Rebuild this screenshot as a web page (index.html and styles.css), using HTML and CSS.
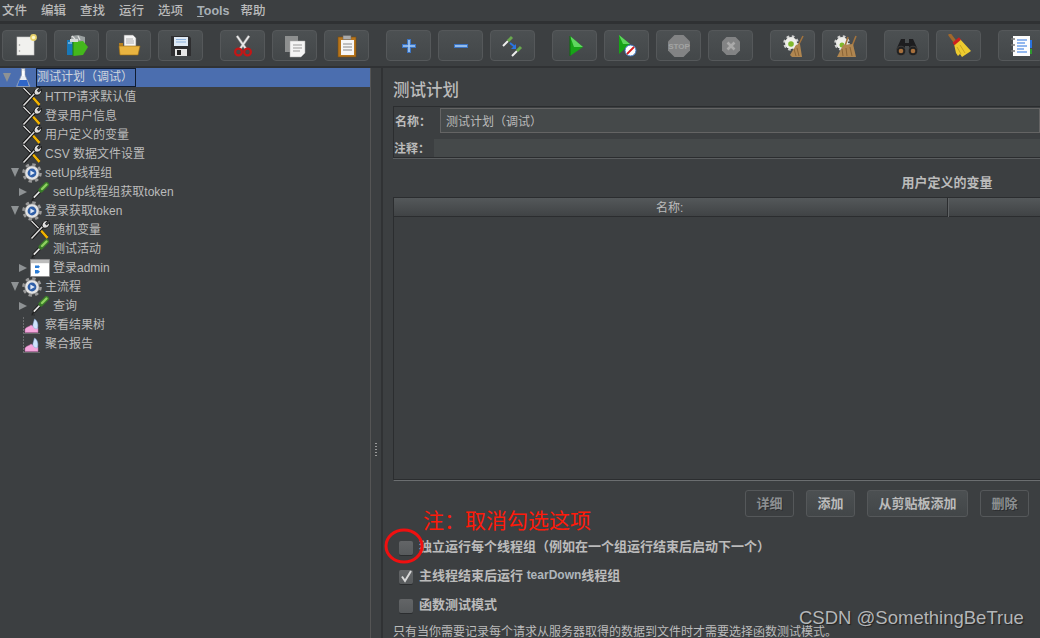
FILE: index.html
```html
<!DOCTYPE html>
<html lang="zh">
<head>
<meta charset="utf-8">
<title>测试计划</title>
<link rel="stylesheet" href="styles.css">
</head>
<body>
<svg class="defs" xmlns="http://www.w3.org/2000/svg">
  <symbol id="i-tool" viewBox="0 0 20 20">
    <path d="M1.500 1 L17 17" stroke="#111" stroke-width="3"/>
    <path d="M1.500 1 L9.500 9.200" stroke="#e8e8e8" stroke-width="1.200"/>
    <path d="M10.500 10 L17.500 17.800" stroke="#f2b400" stroke-width="2.600"/>
    <path d="M1.500 18.500 L14 5" stroke="#111" stroke-width="3.400"/>
    <path d="M1.500 18.500 L14 5" stroke="#d8d8d8" stroke-width="1.600"/>
    <path d="M12.500 7 C11 3 14.500 0 18 0.500 L15.500 3.500 L16.500 5 L19.500 2.500 C20 6.500 16.500 9 13.500 7.800 Z" fill="#ddd" stroke="#111" stroke-width=".9"/>
  </symbol>
  <symbol id="i-gear" viewBox="0 0 20 20">
    <circle cx="10" cy="10" r="8" fill="none" stroke="#9a9a9a" stroke-width="3.600" stroke-dasharray="3.200 3.083"/>
    <circle cx="10" cy="10" r="7.200" fill="#e4e4e4" stroke="#7c7c7c" stroke-width=".7"/>
    <circle cx="10" cy="10" r="4.400" fill="#2f5fa8"/>
    <path d="M8.400 7.600 L12.800 10 L8.400 12.400 Z" fill="#dfe9f7"/>
  </symbol>
  <symbol id="i-pipette" viewBox="0 0 20 20">
    <path d="M1 19 L5 19" stroke="#2b2d2f" stroke-width="1"/>
    <path d="M2 18.500 L4.500 15" stroke="#222" stroke-width="1.400"/>
    <path d="M3.500 16 L12 7" stroke="#1c1c1c" stroke-width="3.400"/>
    <path d="M3.800 15.600 L12 7" stroke="#e6e6e6" stroke-width="1.700"/>
    <path d="M11 8 L16.500 2.500" stroke="#3a7a2a" stroke-width="5" stroke-linecap="round"/>
    <path d="M12 7 L16.500 2.500" stroke="#8ed060" stroke-width="2.400" stroke-linecap="round"/>
  </symbol>
  <symbol id="i-flask" viewBox="0 0 20 20">
    <path d="M7.500 0.500 H11 V7 L16 18.500 H2.500 L7.500 7 Z" fill="#e9eef6" stroke="#8a94a6" stroke-width=".7"/>
    <path d="M5.500 12 H13 L15 18 H3.200 Z" fill="#2f66c9"/>
    <path d="M8 3 H10.500 V8 H8 Z" fill="#fff"/>
  </symbol>
  <symbol id="i-ctrl" viewBox="0 0 20 20">
    <rect x="0.500" y="1.500" width="19" height="17" fill="#fff" stroke="#888" stroke-width=".7"/>
    <rect x="1" y="2" width="18" height="3.200" fill="#bcbcbc"/>
    <path d="M5 7.500 H8 V10 H5 Z M5 12 H8 V15.500 H5 Z" fill="#2b7dd6"/>
    <path d="M8 7 L10 8.800 L8 10.500 Z M8 12 L10 13.800 L8 15.500 Z" fill="#2b7dd6"/>
  </symbol>
  <symbol id="i-graph" viewBox="0 0 20 20">
    <path d="M1.500 2 V19" fill="none" stroke="#6a6c6e" stroke-width="1" stroke-dasharray="2 1"/>
    <path d="M2 18.500 H18" stroke="#6a6c6e" stroke-width="1"/>
    <path d="M3 17.500 V14 C5 11.500 7.500 11.500 9 10 L13 12 L16 13 V17.500 Z" fill="#f4a6dc" stroke="#b868a4" stroke-width=".5"/>
    <path d="M12.500 4 C15.500 5.500 16.500 10 15.500 13.500 C13 14.500 9.500 12.500 11.500 7.500 Z" fill="#cfe3fb" stroke="#7fa3d6" stroke-width=".5"/>
  </symbol>
</svg>

<nav class="menu">
  <span>文件</span><span>编辑</span><span>查找</span><span>运行</span><span>选项</span><span class="tools"><u>T</u>ools</span><span>帮助</span>
</nav>

<div class="toolbar">
  <div class="tgroup">
    <button class="tb"><svg class="ti" viewBox="0 0 24 24"><rect x="4" y="3" width="17" height="18" fill="#f1f1ee" stroke="#c8c8c8" stroke-width=".6"/><circle cx="6.500" cy="11" r=".8" fill="#999"/><circle cx="6.500" cy="17" r=".8" fill="#999"/><circle cx="20.500" cy="3.500" r="3.400" fill="#e8d26a"/><circle cx="20.500" cy="3.500" r="1.700" fill="#fff8c8"/></svg></button>
    <button class="tb"><svg class="ti" viewBox="0 0 24 24"><path d="M6 2 L13 1 L20 3 V10 L6 9 Z" fill="#9aa0a0"/><path d="M7 2 L10 5 M13 2 L15 6" stroke="#e0e0e0" stroke-width="1.200"/><rect x="2" y="6" width="6" height="15" fill="#1878b8"/><path d="M3 9 H7" stroke="#bfe0f5" stroke-width="1"/><path d="M8 8 L18 7 L23 13 L18 21 L8 22 Z" fill="#44b81c"/><path d="M8 8 V22" stroke="#1f7a10" stroke-width="1"/><rect x="5" y="5" width="8" height="3" fill="#d6dad8"/></svg></button>
    <button class="tb"><svg class="ti" viewBox="0 0 24 24"><path d="M7 1 H16 L19 4 V13 H7 Z" fill="#f5f5f5" stroke="#777" stroke-width=".6"/><path d="M9 5 H16 M9 7 H17 M9 9 H17" stroke="#999" stroke-width=".8"/><path d="M2 9 H6 V12 H21 V21 H3 Z" fill="#b9811c"/><path d="M2 12 H23 L21 21 H3 Z" fill="#e9b440" stroke="#9c6b12" stroke-width=".6"/></svg></button>
    <button class="tb"><svg class="ti" viewBox="0 0 24 24"><path d="M2 2 H20 L22 4 V22 H2 Z" fill="#2e2e30"/><rect x="5" y="3" width="14" height="9" fill="#dfe9f4"/><path d="M7 5.500 H17 M7 8 H17" stroke="#8db2dc" stroke-width="1"/><rect x="6" y="15" width="12" height="7" fill="#e6e6e6"/><rect x="8" y="16" width="4" height="5" fill="#222"/></svg></button>
  </div>
  <div class="tgroup">
    <button class="tb"><svg class="ti" viewBox="0 0 24 24"><path d="M6 2 L15 15 M18 2 L9 15" stroke="#8b8b8b" stroke-width="3"/><path d="M6 2 L15 15 M18 2 L9 15" stroke="#e9e9e9" stroke-width="1.600"/><circle cx="7.500" cy="18" r="3.400" fill="none" stroke="#c41616" stroke-width="2.200"/><circle cx="16.500" cy="18" r="3.400" fill="none" stroke="#c41616" stroke-width="2.200"/></svg></button>
    <button class="tb"><svg class="ti" viewBox="0 0 24 24"><rect x="2" y="2" width="13" height="16" fill="#8d8f8f"/><path d="M7 7 H22 V19 L18 23 H7 Z" fill="#f4f4f4" stroke="#aaa" stroke-width=".5"/><path d="M10 11 H19 M10 14 H19 M10 17 H17" stroke="#999" stroke-width="1"/></svg></button>
    <button class="tb"><svg class="ti" viewBox="0 0 24 24"><rect x="3" y="3" width="18" height="20" fill="#b7751c" stroke="#7a4c10" stroke-width=".6"/><rect x="6" y="6" width="13" height="15" fill="#f6f6f6"/><rect x="8" y="1.500" width="8" height="4" fill="#aaa" stroke="#666" stroke-width=".5"/><path d="M8 10 H17 M8 13 H17 M8 16 H17" stroke="#888" stroke-width="1"/></svg></button>
  </div>
  <div class="tgroup">
    <button class="tb"><svg class="ti" viewBox="0 0 24 24"><path d="M12 5 V19 M5 12 H19" stroke="#3b74c4" stroke-width="4"/><path d="M12 6 V18 M6 12 H18" stroke="#a9cdf5" stroke-width="1.600"/></svg></button>
    <button class="tb"><svg class="ti" viewBox="0 0 24 24"><path d="M5 12 H19" stroke="#3b74c4" stroke-width="4"/><path d="M6 12 H18" stroke="#a9cdf5" stroke-width="1.600"/></svg></button>
    <button class="tb"><svg class="ti" viewBox="0 0 24 24"><path d="M2 12 L7 7" stroke="#eee" stroke-width="2"/><path d="M7 7 L11 3" stroke="#6aa84f" stroke-width="3"/><path d="M11 22 L16 17" stroke="#eee" stroke-width="2"/><path d="M16 17 L20 13" stroke="#6aa84f" stroke-width="3"/><path d="M9 9 L14 13" stroke="#2a74e0" stroke-width="2"/><path d="M15 10 V15 H10 Z" fill="#2a74e0"/></svg></button>
  </div>
  <div class="tgroup">
    <button class="tb"><svg class="ti" viewBox="0 0 24 24"><path d="M7 2 L20 13 L7 22 Z" fill="#17a417"/><path d="M7 2 L20 13 L11 13 Z" fill="#5fd65f"/><path d="M7 2 V22" stroke="#0c6e0c" stroke-width="1"/></svg></button>
    <button class="tb"><svg class="ti" viewBox="0 0 24 24"><path d="M4 1 L15 10 L4 20 Z" fill="#17a417"/><path d="M4 1 L15 10 L8 10 Z" fill="#5fd65f"/><circle cx="15.500" cy="16.500" r="5.500" fill="#fff" stroke="#3b74c4" stroke-width="1"/><path d="M12 20 L19 13" stroke="#d41c1c" stroke-width="1.800"/></svg></button>
    <button class="tb"><svg class="ti" viewBox="0 0 24 24"><path d="M7.500 1 H16.500 L23 7.500 V16.500 L16.500 23 H7.500 L1 16.500 V7.500 Z" fill="#828384"/><text x="12" y="15" text-anchor="middle" class="stop">STOP</text></svg></button>
    <button class="tb"><svg class="ti" viewBox="0 0 24 24"><path d="M7.500 3 H16.500 L21 7.500 V16.500 L16.500 21 H7.500 L3 16.500 V7.500 Z" fill="#828384"/><path d="M8.500 8.500 L15.500 15.500 M15.500 8.500 L8.500 15.500" stroke="#a9a9a9" stroke-width="2.600"/></svg></button>
  </div>
  <div class="tgroup">
    <button class="tb"><svg class="ti" viewBox="0 0 24 24"><circle cx="10" cy="9" r="6.300" fill="none" stroke="#cfcfcf" stroke-width="3" stroke-dasharray="2.500 2.450"/><circle cx="10" cy="9" r="6" fill="#eeeeea"/><circle cx="10" cy="10" r="2.800" fill="#7fb82c"/><path d="M22 2 L17 12" stroke="#a3743e" stroke-width="1.600"/><path d="M15 11 L19 10 L21 23 L11 23 L9 21 Z" fill="#b08650"/><path d="M13 15 L15 22 M16 14 L18 22" stroke="#7f5a2e" stroke-width=".8"/></svg></button>
    <button class="tb"><svg class="ti" viewBox="0 0 24 24"><circle cx="9" cy="9" r="6.300" fill="none" stroke="#cfcfcf" stroke-width="3" stroke-dasharray="2.500 2.450"/><circle cx="9" cy="9" r="6" fill="#eeeeea"/><circle cx="9" cy="11" r="2.500" fill="#7fb82c"/><path d="M15 3 L12 12 M23 2 L19 12" stroke="#a3743e" stroke-width="1.600"/><path d="M10 11 L20 10 L23 23 L4 23 L6 19 Z" fill="#b08650"/><path d="M9 15 L10 22 M13 14 L14 22 M17 13 L19 22" stroke="#7f5a2e" stroke-width=".8"/></svg></button>
  </div>
  <div class="tgroup">
    <button class="tb"><svg class="ti" viewBox="0 0 24 24"><path d="M6 5 H10 V9 H14 V5 H18 L23 16 H14 V12 H10 V16 H1 Z" fill="#1d1d1f"/><circle cx="6" cy="17" r="4.800" fill="#222" stroke="#555" stroke-width=".6"/><circle cx="18" cy="17" r="4.800" fill="#222" stroke="#555" stroke-width=".6"/><circle cx="6" cy="17" r="2.300" fill="#a8703c"/><circle cx="18" cy="17" r="2.300" fill="#a8703c"/></svg></button>
    <button class="tb"><svg class="ti" viewBox="0 0 24 24"><path d="M3 1 L9 9" stroke="#a0682c" stroke-width="3.200" stroke-linecap="round"/><path d="M7 10 L13 5 L24 17 L15 23 L13 20 L11 22 L9 19 Z" fill="#eccb2f"/><path d="M6.500 10 L13 4.500" stroke="#cc1f1f" stroke-width="3"/><path d="M13 11 L18 19 M10 13 L14 20" stroke="#b8951a" stroke-width=".7"/></svg></button>
  </div>
  <div class="tgroup">
    <button class="tb"><svg class="ti" viewBox="0 0 24 24"><rect x="4" y="2" width="17" height="20" fill="#fdfdfd"/><path d="M8 6 H18 M8 9 H16 M8 12 H18 M8 15 H15 M8 18 H18" stroke="#2a74e0" stroke-width="1.200"/><path d="M2 5 H6 M2 11 H6 M2 17 H6" stroke="#777" stroke-width="1.600"/><rect x="21" y="6" width="2" height="8" fill="#2a74e0"/><rect x="21" y="15" width="2" height="5" fill="#2f9a2f"/></svg></button>
  </div>
</div>

<main class="main">
  <aside class="tree">
    <div class="row l0 sel"><i class="ar down"></i><svg class="ic"><use href="#i-flask"/></svg><span class="lb edit">测试计划（调试）</span></div>
    <div class="row l1"><i class="ar"></i><svg class="ic"><use href="#i-tool"/></svg><span class="lb">HTTP请求默认值</span></div>
    <div class="row l1"><i class="ar"></i><svg class="ic"><use href="#i-tool"/></svg><span class="lb">登录用户信息</span></div>
    <div class="row l1"><i class="ar"></i><svg class="ic"><use href="#i-tool"/></svg><span class="lb">用户定义的变量</span></div>
    <div class="row l1"><i class="ar"></i><svg class="ic"><use href="#i-tool"/></svg><span class="lb">CSV 数据文件设置</span></div>
    <div class="row l1"><i class="ar down"></i><svg class="ic"><use href="#i-gear"/></svg><span class="lb">setUp线程组</span></div>
    <div class="row l2"><i class="ar right"></i><svg class="ic"><use href="#i-pipette"/></svg><span class="lb">setUp线程组获取token</span></div>
    <div class="row l1"><i class="ar down"></i><svg class="ic"><use href="#i-gear"/></svg><span class="lb">登录获取token</span></div>
    <div class="row l2"><i class="ar"></i><svg class="ic"><use href="#i-tool"/></svg><span class="lb">随机变量</span></div>
    <div class="row l2"><i class="ar"></i><svg class="ic"><use href="#i-pipette"/></svg><span class="lb">测试活动</span></div>
    <div class="row l2"><i class="ar right"></i><svg class="ic"><use href="#i-ctrl"/></svg><span class="lb">登录admin</span></div>
    <div class="row l1"><i class="ar down"></i><svg class="ic"><use href="#i-gear"/></svg><span class="lb">主流程</span></div>
    <div class="row l2"><i class="ar right"></i><svg class="ic"><use href="#i-pipette"/></svg><span class="lb">查询</span></div>
    <div class="row l1"><i class="ar"></i><svg class="ic"><use href="#i-graph"/></svg><span class="lb">察看结果树</span></div>
    <div class="row l1"><i class="ar"></i><svg class="ic"><use href="#i-graph"/></svg><span class="lb">聚合报告</span></div>
  </aside>

  <div class="splitter"><div class="grip"></div></div>

  <section class="panel">
    <h1 class="title">测试计划</h1>
    <div class="group">
      <div class="frow"><label class="flabel name">名称：</label><div class="field">测试计划（调试）</div></div>
      <div class="frow second"><label class="flabel note">注释：</label><div class="field plain"></div></div>
    </div>
    <div class="wide ttl">用户定义的变量</div>
    <div class="wide table">
      <div class="thead"><div class="th">名称:</div><div class="th"></div></div>
    </div>
    <div class="actions">
      <button class="btn off">详细</button>
      <button class="btn">添加</button>
      <button class="btn">从剪贴板添加</button>
      <button class="btn off">删除</button>
    </div>
    <div class="opts">
      <div class="opt"><span class="cb"></span>独立运行每个线程组（例如在一个组运行结束后启动下一个）</div>
      <div class="opt"><span class="cb"><svg class="tick" viewBox="0 0 14 14"><path d="M3 6.500 L6 11 L12 1" fill="none" stroke="#d8d8d8" stroke-width="2"/></svg></span>主线程结束后运行&nbsp;<span class="latin">tearDown</span>线程组</div>
      <div class="opt"><span class="cb"></span>函数测试模式</div>
    </div>
    <p class="hint">只有当你需要记录每个请求从服务器取得的数据到文件时才需要选择函数测试模式。</p>
  </section>
</main>

<div class="note-red">注：取消勾选这项</div>
<svg class="ring" viewBox="0 0 40 36"><ellipse cx="20" cy="18" rx="18" ry="16" fill="none" stroke="#f01010" stroke-width="3"/></svg>
<div class="mark">CSDN @SomethingBeTrue</div>
</body>
</html>
```

FILE: styles.css
```css
* { box-sizing: border-box; }
html, body { margin: 0; padding: 0; }
body {
  position: relative;
  width: 1040px;
  height: 638px;
  overflow: hidden;
  background: #3c3f41;
  color: #bbbbbb;
  font-family: "Liberation Sans", "Noto Sans CJK SC", sans-serif;
  font-size: 12px;
}
.defs { display: block; width: 0; height: 0; overflow: hidden; }

.menu {
  display: flex;
  gap: 14px;
  height: 24px;
  padding: 2px 0 0 2px;
  align-items: flex-start;
  font-size: 12.5px;
  line-height: 18px;
  font-weight: 500;
  border-bottom: 2px solid #2f3133;
  box-shadow: inset 0 -1px 0 #2f3133;
}
.menu .tools { font-family: "Liberation Sans", sans-serif; font-weight: 700; margin-right: -3px; color: #a8b0b6; }

.toolbar {
  display: flex;
  gap: 17px;
  height: 44px;
  padding: 6px 0 0 2px;
  overflow: hidden;
  border-bottom: 2px solid #303234;
}
.tgroup { display: flex; gap: 7px; flex: none; }
.tb {
  flex: none;
  width: 45px;
  height: 31px;
  padding: 0;
  display: flex;
  align-items: center;
  justify-content: center;
  background: linear-gradient(#4c5052, #434749);
  border: 1px solid #55585a;
  border-radius: 4px;
}
.ti { width: 24px; height: 24px; display: block; }
.stop { font: 700 8px "Liberation Sans", sans-serif; fill: #a3a3a3; }

.main { display: flex; height: 570px; }

.tree { flex: none; width: 371px; padding-top: 0; border-right: 1px solid #555; }
.row { display: flex; align-items: center; height: 19px; white-space: nowrap; }
.row.sel { background: #4b6eaf; }
.l0 { padding-left: 2px; }
.l1 { padding-left: 10px; }
.l2 { padding-left: 18px; }
.ar { flex: none; width: 10px; height: 10px; margin-right: 2px; }
.ar.down { width: 0; height: 0; margin: 0 3px 0 1px; border-left: 4.500px solid transparent; border-right: 4.500px solid transparent; border-top: 9px solid #8e9294; }
.ar.right { width: 0; height: 0; margin: 0 3px 0 1px; border-top: 4.500px solid transparent; border-bottom: 4.500px solid transparent; border-left: 8px solid #8e9294; }
.ic { flex: none; width: 20px; height: 20px; display: block; }
.lb { margin-left: 3px; line-height: 16px; }
.edit { margin-left: 2px; padding: 0 3px 0 0; width: 100px; height: 19px; line-height: 17px; border: 1px solid #101c30; color: #d0d6de; }

.splitter {
  flex: none;
  width: 10px;
  display: flex;
  align-items: center;
  justify-content: center;
  padding-top: 195px;
}
.grip {
  width: 6px;
  height: 15px;
  background: repeating-linear-gradient(#9a9a9a 0 1px, transparent 1px 3px);
  border-left: 2px solid #3c3f41;
  border-right: 2px solid #3c3f41;
}

.panel {
  flex: 1;
  min-width: 0;
  overflow: hidden;
  padding-left: 10px;
  border-left: 2px solid #303234;
}
.title {
  margin: 0;
  height: 38px;
  padding-top: 11px;
  font-size: 16.500px;
  line-height: 22px;
  font-weight: 500;
  color: #bbbbbb;
}
.group {
  height: 52px;
  border: 1px solid #2b2d2f;
  border-right: none;
  box-shadow: 0 1px 0 #5a5d5f;
}
.frow { display: flex; align-items: center; padding-left: 1px; margin-top: 1px; }
.frow.second { margin-top: 5px; }
.flabel { flex: none; font-weight: 700; font-size: 12px; line-height: 18px; padding-top: 3px; }
.flabel.name { width: 45px; }
.flabel.note { width: 39px; margin-left: -1px; margin-right: 1px; padding-top: 2px; }
.field {
  flex: 1;
  height: 25px;
  padding: 3px 0 0 5px;
  line-height: 20px;
  background: #45494a;
  border: 1px solid #646464;
}
.field.plain { height: 18px; border: none; }

.wide { width: 1108px; flex: none; }
.ttl {
  height: 39px;
  padding-top: 15px;
  text-align: center;
  font-size: 13px;
  line-height: 20px;
  font-weight: 700;
}
.table {
  height: 284px;
  border-left: 1px solid #2b2d2f;
  border-bottom: 1px solid #6b6e70;
  box-shadow: inset 0 -1px 0 #2b2d2f;
}
.thead {
  display: grid;
  grid-template-columns: 1fr 1fr;
  height: 20px;
  background: linear-gradient(#54585a, #404345);
  border-top: 1px solid #2b2d2f;
  border-bottom: 1px solid #2b2d2f;
}
.th { padding-top: 1px; text-align: center; line-height: 18px; font-size: 12px; transform: translateX(-1px); }
.th + .th { border-left: 1px solid #2b2d2f; box-shadow: inset 1px 0 0 #606365; }

.actions {
  display: flex;
  justify-content: flex-end;
  gap: 12px;
  margin-top: 9px;
  padding-right: 11px;
}
.btn {
  height: 27px;
  padding: 0 10.500px 2px;
  font-family: "Liberation Sans", "Noto Sans CJK SC", sans-serif;
  font-size: 13px;
  font-weight: 700;
  color: #bbbbbb;
  background: linear-gradient(#4c5052, #424648);
  border: 1px solid #55585a;
  border-radius: 3px;
}
.btn.off { background: #3c3f41; color: #8c8f91; text-shadow: 1px 1px 0 #2c2e30; }

.opts { margin-top: 16px; }
.opt {
  display: flex;
  align-items: center;
  height: 29px;
  padding: 0 0 4px 6px;
  font-size: 13px;
  font-weight: 700;
  white-space: pre;
}
.latin { font-size: 12px; font-weight: 700; color: #aeb6bc; }
.cb {
  flex: none;
  width: 14px;
  height: 14px;
  margin: 4px 6px 0 0;
  background: linear-gradient(#636567, #575a5c);
  border-radius: 2px;
  box-shadow: 0 1px 0 #2b2d2f;
}
.tick { display: block; width: 14px; height: 14px; }
.hint { margin: 0; font-size: 12px; line-height: 24px; white-space: nowrap; }

.note-red {
  position: absolute;
  left: 423px;
  top: 504px;
  font-family: "Noto Sans CJK SC", sans-serif;
  font-size: 21px;
  line-height: 30px;
  font-weight: 400;
  color: #ff1a0a;
}
.ring { position: absolute; left: 384px; top: 528px; width: 40px; height: 36px; }
.mark {
  position: absolute;
  left: 799px;
  top: 606px;
  font-family: "Liberation Sans", sans-serif;
  font-size: 18.500px;
  line-height: 24px;
  color: #b4b6b8;
  text-shadow: 1px 1px 1px #222;
  white-space: nowrap;
}
```
